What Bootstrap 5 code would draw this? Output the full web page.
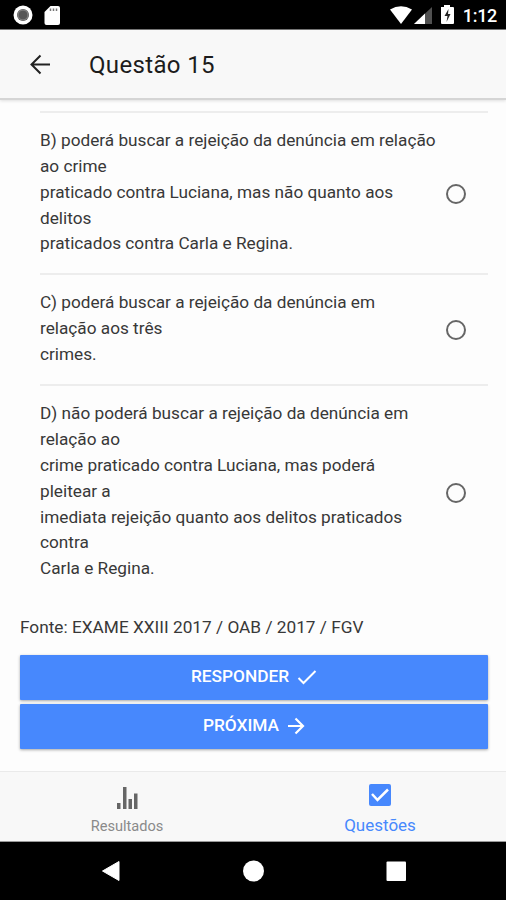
<!DOCTYPE html>
<html lang="pt-BR">
<head>
<meta charset="utf-8">
<meta name="viewport" content="width=device-width, initial-scale=1">
<title>Questão 15</title>
<link href="https://cdn.jsdelivr.net/npm/bootstrap@5.3.0/dist/css/bootstrap.min.css" rel="stylesheet">
<style>
  body { font-family: Roboto, "Liberation Sans", sans-serif; background: #fdfdfd; color: #383838; }
  svg { display: block; flex: none; }
  .screen { width: 506px; height: 900px; }
  .status-bar { height: 30px; background: #000; padding: 0 9px 0 13px; border-bottom: 1px solid #777; }
  .clock { font-size: 18px; font-weight: 500; line-height: 28px; padding-top: 2px; letter-spacing: -.3px; margin-left: 8px; }
  .app-header { height: 70px; background: #f8f8f8; border-bottom: 2px solid #d5d5d5; box-shadow: 0 1px 3px rgba(0,0,0,.12); padding: 2px 28px 0; }
  .app-title { font-size: 24px; font-weight: 400; line-height: 30px; margin: 0 0 0 37px; color: #1c1c1c; letter-spacing: .35px; }
  .answers { margin: 11px 18px 0 40px; }
  .answer { border-top: 2px solid #ededed; padding: 15px 22px 16.2px 0; font-size: 17.22px; line-height: 25.85px; white-space: nowrap; cursor: pointer; }
  .answer .form-check-input { width: 20px; height: 20px; margin: 2px 0 0; border: 2.3px solid #666; background: transparent; }
  .source { font-size: 17.25px; line-height: 26px; margin: 16px 0 15px 20px; }
  .actions { margin: 0 18px 0 20px; gap: 4.500px; }
  .action { --bs-btn-bg: #4788fd; --bs-btn-border-color: #4788fd; --bs-btn-hover-bg: #387cf2; height: 44.500px; border: 0; border-radius: 1px; padding: 0 0 1px; color: #fff; font-size: 17.3px; font-weight: 500; box-shadow: 0 1px 3px rgba(0,0,0,.35); }
  .tabs-bar { height: 71px; background: #f8f8f8; border-top: 1px solid #eaeaea; border-bottom: 1px solid #999; }
  .tab-link { color: #8a8a8a; text-decoration: none; font-size: 14.6px; line-height: 22px; padding-left: 1px; }
  .tab-link.active { color: #4788fd; font-size: 17px; }
  .system-nav { height: 58px; background: #000; padding: 0 99px 0 101px; }
</style>
</head>
<body>
<div class="screen d-flex flex-column overflow-hidden">
  <div class="status-bar d-flex align-items-center text-white flex-shrink-0">
    <svg width="20" height="20" viewBox="0 0 20 20"><circle cx="10" cy="10" r="9.5" fill="#fff"/><circle cx="10" cy="10" r="6" fill="#555"/><circle cx="10" cy="10" r="5" fill="none" stroke="#888"/></svg>
    <svg class="ms-2" width="24" height="20" viewBox="0 0 24 20"><path d="M9.500 1H17q2 0 2 2v15q0 2-2 2H5.500q-2 0-2-2V7z" fill="#fff"/><path d="M9.500 3.500v2.500M12.500 3.500v2.500M15.500 3.500v2.500" stroke="#777" stroke-width="1.500"/></svg>
    <svg class="ms-auto" width="67" height="22" viewBox="0 0 67 22">
      <path d="M2 5.500Q13-1 24 5.500L13 20z" fill="#fff"/>
      <path d="M26 20L44 3v17z" fill="#505050"/><path d="M26 20L37 9.500V20z" fill="#fff"/>
      <path d="M53 3h3V1h6v2h3q1 0 1 1v15q0 1-1 1H54q-1 0-1-1z" fill="#fff"/><path d="M60.500 5l-4 7h3l-1 6 4-8h-2.500z" fill="#222"/>
    </svg>
    <span class="clock">1:12</span>
  </div>
  <header class="app-header d-flex align-items-center flex-shrink-0">
    <svg width="24" height="22" viewBox="0 0 24 22" fill="none" stroke="#222" stroke-width="2"><path d="M22 10.500H4M12.500 1.500L3.500 10.500l9 9"/></svg>
    <h1 class="app-title">Questão 15</h1>
  </header>
  <main class="flex-grow-1">
    <div class="answers">
      <label class="answer d-flex align-items-center justify-content-between">
        <span>B) poderá buscar a rejeição da denúncia em relação<br>ao crime<br>praticado contra Luciana, mas não quanto aos<br>delitos<br>praticados contra Carla e Regina.</span>
        <input class="form-check-input" type="radio" name="answer">
      </label>
      <label class="answer d-flex align-items-center justify-content-between">
        <span>C) poderá buscar a rejeição da denúncia em<br>relação aos três<br>crimes.</span>
        <input class="form-check-input" type="radio" name="answer">
      </label>
      <label class="answer d-flex align-items-center justify-content-between">
        <span>D) não poderá buscar a rejeição da denúncia em<br>relação ao<br>crime praticado contra Luciana, mas poderá<br>pleitear a<br>imediata rejeição quanto aos delitos praticados<br>contra<br>Carla e Regina.</span>
        <input class="form-check-input" type="radio" name="answer">
      </label>
    </div>
    <p class="source">Fonte: EXAME XXIII 2017 / OAB / 2017 / FGV</p>
    <div class="actions d-flex flex-column">
      <button class="action btn btn-primary d-flex align-items-center justify-content-center" type="button">RESPONDER
        <svg class="ms-2" width="20" height="18" viewBox="0 0 20 18" fill="none" stroke="#fff" stroke-width="2"><path d="M1.500 10l5 5L18.500 3"/></svg>
      </button>
      <button class="action btn btn-primary d-flex align-items-center justify-content-center" type="button">PRÓXIMA
        <svg class="ms-2" width="18" height="18" viewBox="0 0 18 18" fill="none" stroke="#fff" stroke-width="2.200"><path d="M1 9h14M8.500 1.500L16 9l-7.500 7.500"/></svg>
      </button>
    </div>
  </main>
  <nav class="tabs-bar d-flex flex-shrink-0">
    <a class="tab-link w-50 d-flex flex-column align-items-center" href="#">
      <svg width="24" height="43" viewBox="0 0 24 43" fill="#666"><path d="M2 31h3.500v6H2zM8 15h3.500v22H8zM13.500 27H17v10h-3.500zM19 21.500h3.500V37H19z"/></svg>
      <span>Resultados</span>
    </a>
    <a class="tab-link active w-50 d-flex flex-column align-items-center" href="#">
      <svg width="24" height="42" viewBox="0 0 24 42"><rect x="1" y="12" width="22" height="22" rx="2" fill="#4788fd"/><path d="M4 22l5.500 6L20 17.500" fill="none" stroke="#fff" stroke-width="2.500"/></svg>
      <span>Questões</span>
    </a>
  </nav>
  <div class="system-nav d-flex align-items-center justify-content-between flex-shrink-0">
    <svg width="20" height="22" viewBox="0 0 20 22"><path d="M1.500 11L18 1.500v19z" fill="#fff" stroke="#fff" stroke-linejoin="round"/></svg>
    <svg width="22" height="22" viewBox="0 0 22 22"><circle cx="11.500" cy="11" r="10.500" fill="#fff"/></svg>
    <svg width="22" height="22" viewBox="0 0 22 22"><rect x="1.500" y="1.500" width="19.500" height="19.500" rx="1" fill="#fff"/></svg>
  </div>
</div>
<script src="https://cdn.jsdelivr.net/npm/bootstrap@5.3.0/dist/js/bootstrap.bundle.min.js"></script>
</body>
</html>
